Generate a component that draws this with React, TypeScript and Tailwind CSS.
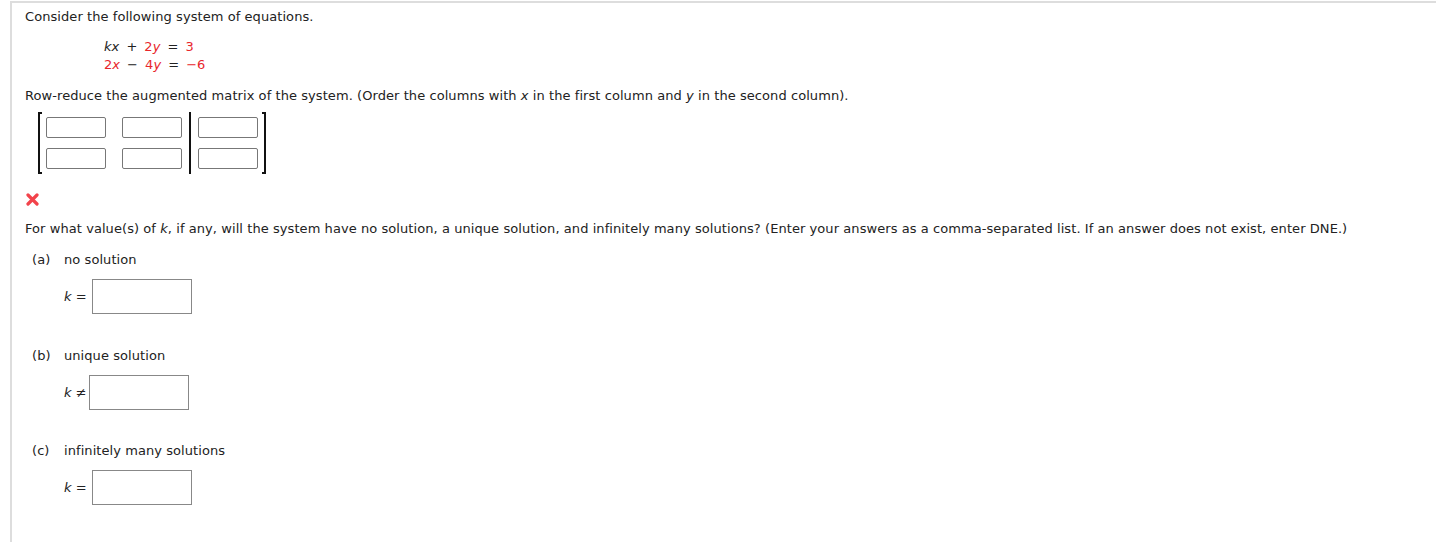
import React from "react";

const font = { fontFamily: '"DejaVu Sans", Verdana, sans-serif' };

function Cell() {
  return <div className="h-[21px] w-[60px] rounded-[2px] border border-[#777] bg-white" />;
}

function AnswerRow({ op, shift }: { op: string; shift?: boolean }) {
  return (
    <div className="flex items-center">
      <span className={`italic ${shift ? "w-[25px]" : "w-[28px]"}`}>
        k <span className="not-italic">{op}</span>
      </span>
      <div className="h-[35px] w-[100px] border border-[#888] bg-white" />
    </div>
  );
}

const Red = ({ children }: { children: React.ReactNode }) => <span className="text-[#e8262c]">{children}</span>;
const Op = ({ children }: { children: React.ReactNode }) => <span className="mx-[7px]">{children}</span>;

export default function App() {
  return (
    <div className="min-h-screen bg-white text-[13px] leading-[16px] tracking-[0.07px] text-[#222]" style={font}>
      <div className="h-[1px]" />
      <div className="ml-[10px] min-h-[541px] border-l-2 border-t-2 border-[#ddd] pl-[13px] pt-[6px]">
        <p>Consider the following system of equations.</p>

        <div className="ml-[79px] mt-[13px] leading-[18px]">
          <div>
            <i>kx</i>
            <Op>+</Op>
            <Red>
              2<i>y</i>
            </Red>
            <Op>=</Op>
            <Red>3</Red>
          </div>
          <div>
            <Red>
              2<i>x</i>
            </Red>
            <Op>−</Op>
            <Red>
              4<i>y</i>
            </Red>
            <Op>=</Op>
            <Red>−6</Red>
          </div>
        </div>

        <p className="mt-[14px]">
          Row-reduce the augmented matrix of the system. (Order the columns with <i>x</i> in the first column and{" "}
          <i>y</i> in the second column).
        </p>

        {/* matrix */}
        <div className="ml-[13px] mt-[8px] flex h-[62px] w-fit items-stretch">
          <div className="w-[4px] border-y-2 border-l-2 border-[#111]" />
          <div className="flex flex-col justify-center gap-[10px] pl-[4px]">
            <div className="flex gap-[16px]">
              <Cell />
              <Cell />
            </div>
            <div className="flex gap-[16px]">
              <Cell />
              <Cell />
            </div>
          </div>
          <div className="mx-[7px] w-[2px] bg-[#111]" />
          <div className="flex flex-col justify-center gap-[10px]">
            <Cell />
            <Cell />
          </div>
          <div className="ml-[4px] w-[4px] border-y-2 border-r-2 border-[#111]" />
        </div>

        <svg width="13" height="13" viewBox="0 0 13 13" className="ml-[1px] mt-[19px] block">
          <path d="M2 2 L11 11 M11 2 L2 11" stroke="#f2434b" strokeWidth="3.2" strokeLinecap="round" />
        </svg>

        <p className="mt-[15px]">
          For what value(s) of <i>k</i>, if any, will the system have no solution, a unique solution, and infinitely many
          solutions? (Enter your answers as a comma-separated list. If an answer does not exist, enter DNE.)
        </p>

        <div className="ml-[7px] mt-[15px]">
          <div className="flex">
            <span className="w-[32px]">(a)</span>
            <span>no solution</span>
          </div>
          <div className="ml-[32px] mt-[11px]">
            <AnswerRow op="=" />
          </div>

          <div className="mt-[34px] flex">
            <span className="w-[32px]">(b)</span>
            <span>unique solution</span>
          </div>
          <div className="ml-[32px] mt-[11px]">
            <AnswerRow op="≠" shift />
          </div>

          <div className="mt-[33px] flex">
            <span className="w-[32px]">(c)</span>
            <span>infinitely many solutions</span>
          </div>
          <div className="ml-[32px] mt-[11px]">
            <AnswerRow op="=" />
          </div>
        </div>
      </div>
    </div>
  );
}
